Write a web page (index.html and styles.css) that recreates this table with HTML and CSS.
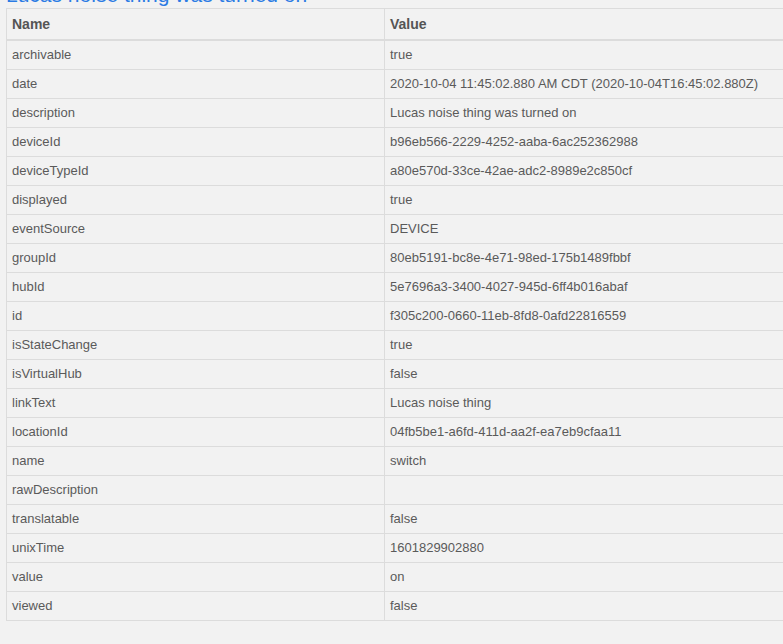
FILE: index.html
```html
<!DOCTYPE html>
<html>
<head>
<meta charset="utf-8">
<link rel="stylesheet" href="styles.css">
</head>
<body>
<div class="page">
  <h2 class="title">Lucas noise thing was turned on</h2>
  <table class="props">
    <thead>
      <tr><th class="col-name">Name</th><th>Value</th></tr>
    </thead>
    <tbody>
      <tr><td>archivable</td><td>true</td></tr>
      <tr><td>date</td><td>2020-10-04 11:45:02.880 AM CDT (2020-10-04T16:45:02.880Z)</td></tr>
      <tr><td>description</td><td>Lucas noise thing was turned on</td></tr>
      <tr><td>deviceId</td><td>b96eb566-2229-4252-aaba-6ac252362988</td></tr>
      <tr><td>deviceTypeId</td><td>a80e570d-33ce-42ae-adc2-8989e2c850cf</td></tr>
      <tr><td>displayed</td><td>true</td></tr>
      <tr><td>eventSource</td><td>DEVICE</td></tr>
      <tr><td>groupId</td><td>80eb5191-bc8e-4e71-98ed-175b1489fbbf</td></tr>
      <tr><td>hubId</td><td>5e7696a3-3400-4027-945d-6ff4b016abaf</td></tr>
      <tr><td>id</td><td>f305c200-0660-11eb-8fd8-0afd22816559</td></tr>
      <tr><td>isStateChange</td><td>true</td></tr>
      <tr><td>isVirtualHub</td><td>false</td></tr>
      <tr><td>linkText</td><td>Lucas noise thing</td></tr>
      <tr><td>locationId</td><td>04fb5be1-a6fd-411d-aa2f-ea7eb9cfaa11</td></tr>
      <tr><td>name</td><td>switch</td></tr>
      <tr><td>rawDescription</td><td></td></tr>
      <tr><td>translatable</td><td>false</td></tr>
      <tr><td>unixTime</td><td>1601829902880</td></tr>
      <tr><td>value</td><td>on</td></tr>
      <tr><td>viewed</td><td>false</td></tr>
    </tbody>
  </table>
</div>
</body>
</html>
```
FILE: styles.css
```css
html, body {
  margin: 0;
  padding: 0;
  background: #f2f2f2;
  overflow: hidden;
}
.page {
  padding: 0 0 0 6px;
  width: 820px;
  font-family: "Liberation Sans", Arial, sans-serif;
}
.title {
  margin: -18px 0 0 0;
  height: 26px;
  font-size: 21px;
  font-weight: 400;
  line-height: 26px;
  color: #2b7be4;
}
.props {
  border-collapse: collapse;
  width: 820px;
  font-size: 13px;
  color: #5a5a5a;
}
.props th, .props td {
  border: 1px solid #dcdcdc;
  padding: 4px 5px;
  line-height: 20px;
  text-align: left;
  vertical-align: middle;
  height: 20px;
}
.props th {
  font-size: 14px;
  font-weight: 700;
  color: #555;
  border-bottom: 2px solid #dcdcdc;
  padding-top: 5px;
  padding-bottom: 5px;
}
.col-name {
  width: 367px;
}
```
